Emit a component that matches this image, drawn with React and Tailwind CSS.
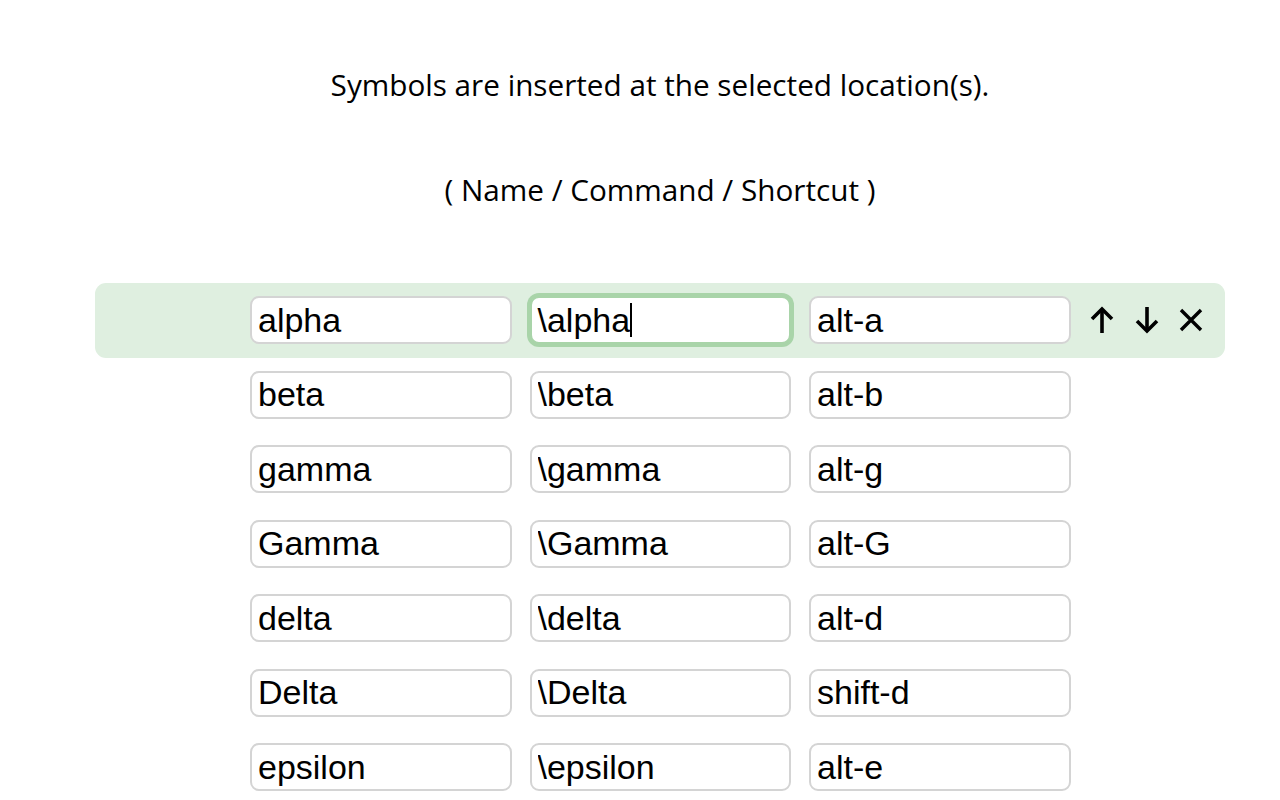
import React from "react";

const rows = [
  ["alpha", "\\alpha", "alt-a"],
  ["beta", "\\beta", "alt-b"],
  ["gamma", "\\gamma", "alt-g"],
  ["Gamma", "\\Gamma", "alt-G"],
  ["delta", "\\delta", "alt-d"],
  ["Delta", "\\Delta", "shift-d"],
  ["epsilon", "\\epsilon", "alt-e"],
  ["zeta", "\\zeta", "alt-z"],
];

const inputCls =
  "w-[261.5px] h-[48px] shrink-0 rounded-[9px] border-2 border-[#d4d4d4] bg-white px-[6px] text-[34px] text-black outline-none";

function Field({ value, focused }) {
  if (focused) {
    return (
      <div className="w-[261.5px] h-[48px] shrink-0 rounded-[9px] border-2 border-[#a9d4a9] ring-[3px] ring-[#a9d4a9] bg-white px-[6px] text-[34px] text-black flex items-center leading-none">
        <span>{value}</span>
        <span className="inline-block w-[2px] h-[34px] bg-black" />
      </div>
    );
  }
  return <input className={inputCls} defaultValue={value} style={{ fontFamily: '"Liberation Sans", Arial, sans-serif' }} />;
}

function Up() {
  return (
    <svg width="26" height="28" viewBox="0 0 26 28" fill="none" stroke="black" strokeWidth="3.6" strokeLinecap="butt" strokeLinejoin="miter">
      <path d="M13 27V3" />
      <path d="M3 13L13 3L23 13" />
    </svg>
  );
}
function Down() {
  return (
    <svg width="26" height="28" viewBox="0 0 26 28" fill="none" stroke="black" strokeWidth="3.6" strokeLinecap="butt" strokeLinejoin="miter">
      <path d="M13 1V25" />
      <path d="M3 15L13 25L23 15" />
    </svg>
  );
}
function Close() {
  return (
    <svg width="24" height="24" viewBox="0 0 24 24" fill="none" stroke="black" strokeWidth="3.4">
      <path d="M2 2L22 22M22 2L2 22" />
    </svg>
  );
}

export default function App() {
  return (
    <div className="min-h-screen bg-white" style={{ fontFamily: '"Liberation Sans", Arial, sans-serif' }}>
      <div className="ml-[95px] w-[1130px]">
        <div className="pt-[65px] text-center text-[29.7px] leading-[40px] text-black" style={{ fontFamily: '"Open Sans", "Noto Sans", sans-serif' }}>
          <p>Symbols are inserted at the selected location(s).</p>
          <p className="mt-[65px] whitespace-pre">( Name / Command / Shortcut )</p>
        </div>
        <div className="mt-[73px] flex flex-col">
          {rows.map((r, i) => (
            <div
              key={i}
              className={
                "h-[74.5px] flex items-center pl-[155px] gap-[18px] rounded-[11px] " +
                (i === 0 ? "bg-[#dfefe0]" : "")
              }
            >
              <Field value={r[0]} />
              <Field value={r[1]} focused={i === 0} />
              <Field value={r[2]} />
              {i === 0 && (
                <div className="flex items-center gap-[19px] ml-[0px]">
                  <Up />
                  <Down />
                  <Close />
                </div>
              )}
            </div>
          ))}
        </div>
      </div>
    </div>
  );
}
